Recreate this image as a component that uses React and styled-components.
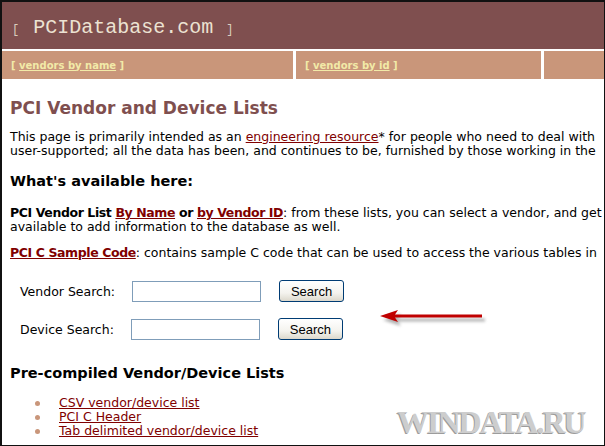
import React from "react";
import styled, { createGlobalStyle } from "styled-components";

const GlobalStyle = createGlobalStyle`
  html, body { margin: 0; padding: 0; background: #fff; overflow: hidden; }
  body { font-family: "DejaVu Sans", Verdana, sans-serif; }
`;

const Frame = styled.div`
  position: relative;
  width: 605px;
  height: 446px;
  box-sizing: border-box;
  border-style: solid;
  border-color: #111;
  border-width: 2px 1px 1px 2px;
  overflow: hidden;
  background: #fff;
`;

const Page = styled.div`
  width: 820px;
`;

const Header = styled.div`
  height: 47px;
  background: #7f4f4f;
  display: flex;
  align-items: center;
  padding-left: 10px;
  padding-top: 3px;
  box-sizing: border-box;
`;

const Title = styled.div`
  display: flex;
  align-items: baseline;
  color: #ece2d2;
  font-family: "Liberation Mono", "DejaVu Sans Mono", monospace;
`;

const Bracket = styled.span`
  font-size: 12px;
  color: #d9cdbd;
`;

const Brand = styled.span`
  font-size: 20px;
  margin: 0 13px 0 14px;
`;

const Nav = styled.div`
  display: flex;
  gap: 3px;
  margin-top: 2px;
  height: 28px;
`;

const NavCell = styled.div`
  flex: ${(p) => (p.$w ? `0 0 ${p.$w}px` : "1 1 auto")};
  background: #c9967a;
  display: flex;
  align-items: center;
  padding-left: 9px;
  box-sizing: border-box;
  font-size: 10px;
  font-weight: bold;
  color: #f2eaa8;
`;

const NavLink = styled.a`
  color: #f2eaa8;
  text-decoration: underline;
`;

const Content = styled.div`
  padding-left: 8px;
`;

const H1 = styled.h1`
  margin: 18px 0 0;
  font-size: 17px;
  line-height: 22px;
  font-weight: bold;
  color: #7f4f4f;
`;

const H2 = styled.h2`
  margin: ${(p) => p.$mt}px 0 0;
  font-size: 14.5px;
  line-height: 20px;
  font-weight: bold;
  color: #000;
`;

const P = styled.p`
  margin: ${(p) => p.$mt}px 0 0;
  font-size: 12.5px;
  line-height: 14px;
  color: #000;
  white-space: nowrap;
`;

const Strong = styled.b`
  font-weight: bold;
  letter-spacing: -0.4px;
`;

const Link = styled.a`
  color: #800000;
  text-decoration: underline;
  font-weight: ${(p) => (p.$bold ? "bold" : "normal")};
  letter-spacing: ${(p) => (p.$bold ? "-0.4px" : "normal")};
`;

const Forms = styled.div`
  margin-top: 20px;
  padding-left: 10px;
  display: flex;
  flex-direction: column;
  gap: 16px;
`;

const FormRow = styled.form`
  display: flex;
  align-items: center;
  gap: 17px;
  margin: 0;
  height: 22px;
`;

const Label = styled.label`
  font-size: 12.5px;
  color: #000;
`;

const Input = styled.input`
  width: 129px;
  height: 21px;
  box-sizing: border-box;
  border: 1px solid #7f9db9;
  padding: 1px 3px;
  margin: 0;
  background: #fff;
`;

const Button = styled.button`
  width: 65px;
  height: 22px;
  box-sizing: border-box;
  margin-left: 1px;
  border: 1px solid #003c74;
  border-radius: 3px;
  background: linear-gradient(#ffffff 0%, #f4f3ee 60%, #dcd8cc 100%);
  font-family: "Liberation Sans", Arial, sans-serif;
  font-size: 13px;
  color: #000;
  padding: 0;
`;

const List = styled.ul`
  list-style: none;
  margin: 13px 0 0;
  padding: 0 0 0 25px;
`;

const Item = styled.li`
  display: flex;
  align-items: center;
  gap: 19px;
  font-size: 12.5px;
  line-height: 14px;
`;

const Bullet = styled.span`
  width: 5px;
  height: 5px;
  border-radius: 50%;
  background: #c9967a;
  flex: none;
`;

const Arrow = styled.svg`
  position: absolute;
  left: 372px;
  top: 302px;
`;

const Watermark = styled.div`
  position: absolute;
  left: 395px;
  top: 402px;
  font-family: "Liberation Serif", "DejaVu Serif", serif;
  font-weight: bold;
  font-size: 32px;
  letter-spacing: -2px;
  color: #cdcdcd;
  text-shadow: -1px 1px 0 #9c9c9c;
`;

export default function App() {
  return (
    <>
      <GlobalStyle />
      <Frame>
        <Page>
          <Header>
            <Title>
              <Bracket>[</Bracket>
              <Brand>PCIDatabase.com</Brand>
              <Bracket>]</Bracket>
            </Title>
          </Header>
          <Nav>
            <NavCell $w={291}>
              [&nbsp;<NavLink>vendors by name</NavLink>&nbsp;]
            </NavCell>
            <NavCell $w={245}>
              [&nbsp;<NavLink>vendors by id</NavLink>&nbsp;]
            </NavCell>
            <NavCell />
          </Nav>
          <Content>
            <H1>PCI Vendor and Device Lists</H1>
            <P $mt={11}>
              This page is primarily intended as an <Link>engineering resource</Link>* for people who need to deal with
              <br />
              user-supported; all the data has been, and continues to be, furnished by those working in the
            </P>
            <H2 $mt={13}>What's available here:</H2>
            <P $mt={15}>
              <Strong>PCI Vendor List</Strong> <Link $bold>By Name</Link> <Strong>or</Strong> <Link $bold>by Vendor ID</Link>: from these lists, you can select a vendor, and get
              <br />
              available to add information to the database as well.
            </P>
            <P $mt={12}>
              <Link $bold>PCI C Sample Code</Link>: contains sample C code that can be used to access the various tables in
            </P>
            <Forms>
              <FormRow>
                <Label>Vendor Search:</Label>
                <Input type="text" />
                <Button type="button">Search</Button>
              </FormRow>
              <FormRow>
                <Label>Device Search:</Label>
                <Input type="text" />
                <Button type="button">Search</Button>
              </FormRow>
            </Forms>
            <H2 $mt={23}>Pre-compiled Vendor/Device Lists</H2>
            <List>
              <Item><Bullet /><Link>CSV vendor/device list</Link></Item>
              <Item><Bullet /><Link>PCI C Header</Link></Item>
              <Item><Bullet /><Link>Tab delimited vendor/device list</Link></Item>
            </List>
          </Content>
        </Page>
        <Arrow width="120" height="28" viewBox="0 0 120 28">
          <defs>
            <filter id="sh" x="-10%" y="-50%" width="130%" height="220%">
              <feGaussianBlur stdDeviation="1.5" />
            </filter>
          </defs>
          <g transform="translate(3,4)" opacity="0.45" filter="url(#sh)">
            <path d="M6 12 L24 6 L21 10.5 L108 10.5 L108 13.5 L21 13.5 L24 18 Z" fill="#555" />
          </g>
          <path d="M6 12 L24 6 L21 10.5 L108 10.5 L108 13.5 L21 13.5 L24 18 Z" fill="#c00000" />
        </Arrow>
        <Watermark>WINDATA.RU</Watermark>
      </Frame>
    </>
  );
}
